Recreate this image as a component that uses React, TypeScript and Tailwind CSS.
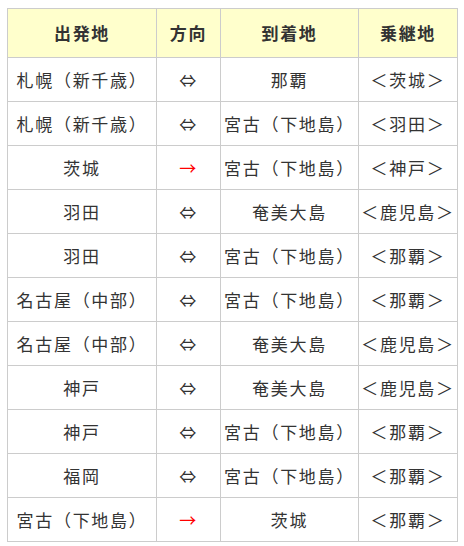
import React from "react";

const rows: [string, string, string, string][] = [
  ["札幌（新千歳）", "⇔", "那覇", "＜茨城＞"],
  ["札幌（新千歳）", "⇔", "宮古（下地島）", "＜羽田＞"],
  ["茨城", "→", "宮古（下地島）", "＜神戸＞"],
  ["羽田", "⇔", "奄美大島", "＜鹿児島＞"],
  ["羽田", "⇔", "宮古（下地島）", "＜那覇＞"],
  ["名古屋（中部）", "⇔", "宮古（下地島）", "＜那覇＞"],
  ["名古屋（中部）", "⇔", "奄美大島", "＜鹿児島＞"],
  ["神戸", "⇔", "奄美大島", "＜鹿児島＞"],
  ["神戸", "⇔", "宮古（下地島）", "＜那覇＞"],
  ["福岡", "⇔", "宮古（下地島）", "＜那覇＞"],
  ["宮古（下地島）", "→", "茨城", "＜那覇＞"],
];

const headers = ["出発地", "方向", "到着地", "乗継地"];

export default function App() {
  return (
    <div
      className="w-[464px] h-[546px] bg-white pt-[8px] pl-[7px] text-[#333]"
      style={{ fontFamily: '"Noto Sans CJK JP", "Noto Sans", sans-serif' }}
    >
      <div className="grid grid-cols-[149px_64px_138px_99px] w-fit border-l border-t border-[#ccc]">
        {headers.map((h) => (
          <div
            key={h}
            className="h-[49px] flex items-center justify-center border-r border-b border-[#ccc] bg-[#ffffcc] font-bold text-[17px] tracking-[0.1em] whitespace-nowrap"
          >
            {h}
          </div>
        ))}
        {rows.map((r, i) =>
          r.map((c, j) => (
            <div
              key={`${i}-${j}`}
              className={
                "h-[44px] flex items-center justify-center border-r border-b border-[#ccc] text-[17px] tracking-[0.1em] whitespace-nowrap " +
                (j === 1 ? (c === "→" ? "text-[#ff0000]" : "text-[#333]") : "")
              }
            >
              {c}
            </div>
          ))
        )}
      </div>
    </div>
  );
}
